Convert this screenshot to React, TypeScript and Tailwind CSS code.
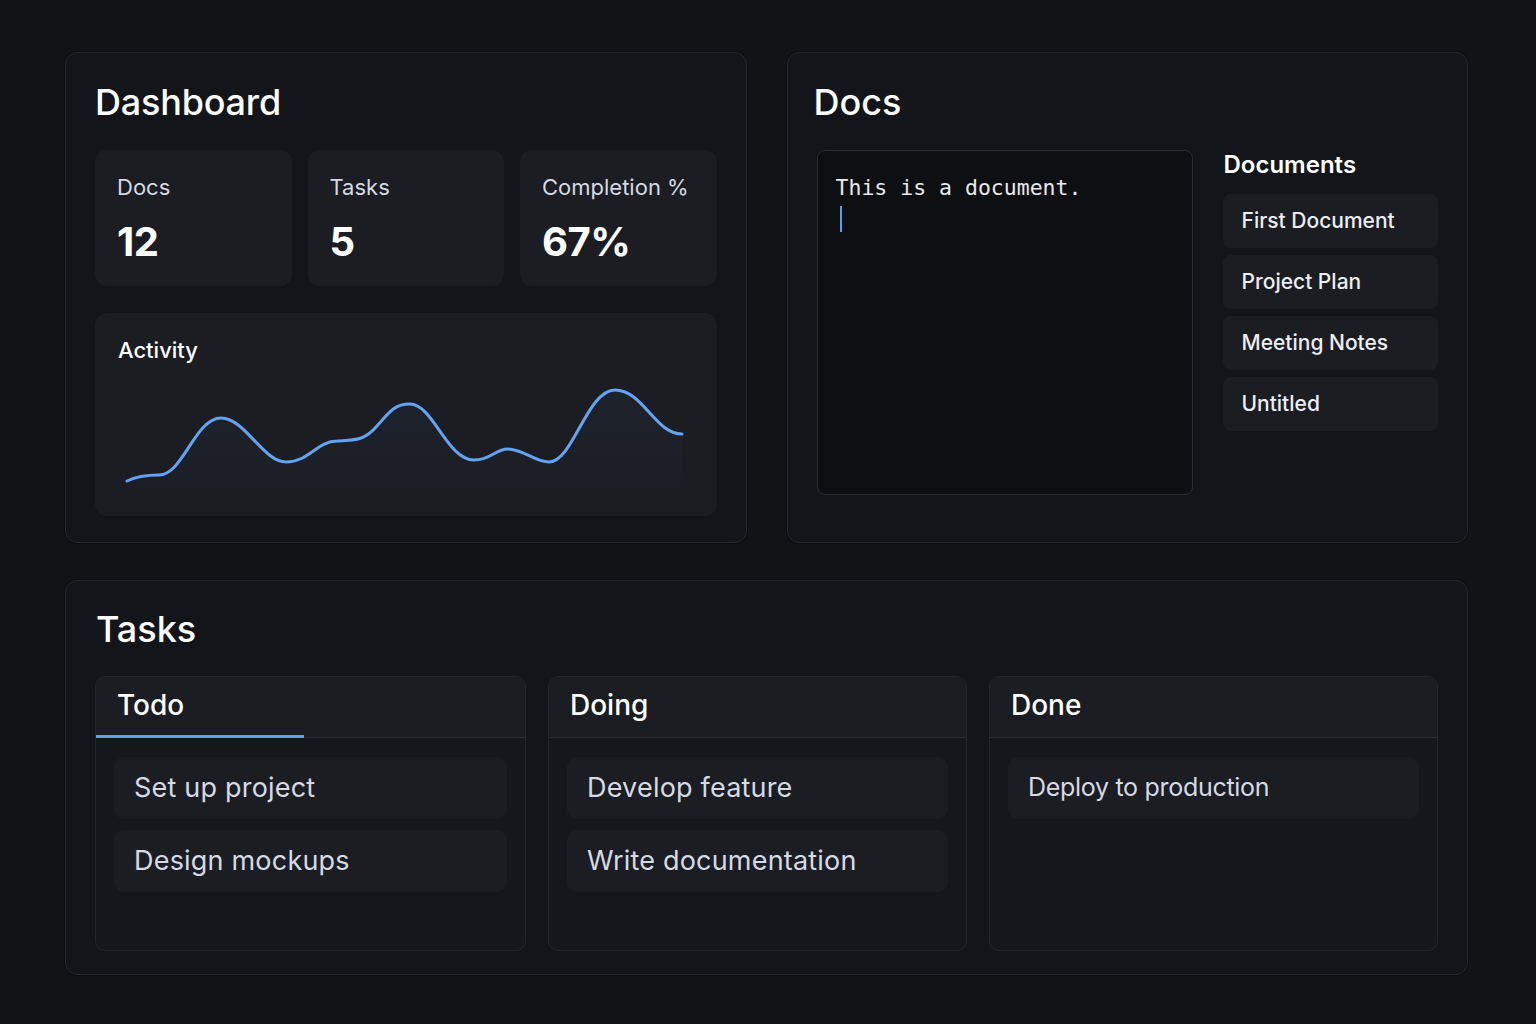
import React from "react";

const stats = [
  { label: "Docs", value: "12" },
  { label: "Tasks", value: "5" },
  { label: "Completion %", value: "67%" },
];

const documents = ["First Document", "Project Plan", "Meeting Notes", "Untitled"];

const columns = [
  { title: "Todo", active: true, tight: false, items: ["Set up project", "Design mockups"] },
  { title: "Doing", active: false, tight: false, items: ["Develop feature", "Write documentation"] },
  { title: "Done", active: false, tight: true, items: ["Deploy to production"] },
];

// same curve for the line and the faint fill below it
const curve =
  "M32 117 C42 112 54 111 64 111 C88 111 100 54 126 54 C150 54 168 98 191 98 C214 98 222 77 242 77 C262 76 270 76 282 62 C295 47 300 40 315 40 C338 40 352 96 379 96 C396 96 400 85 413 85 C428 85 440 98 454 98 C478 98 492 26 520 26 C548 26 560 70 587 70";

export default function App() {
  return (
    <div className="min-h-screen w-full bg-[#111317] pl-[65px] pr-[68px] pt-[52px] pb-[50px] font-['Inter',sans-serif] text-white">
      <div className="grid grid-cols-2 gap-10">
        <Dashboard />
        <Docs />
      </div>
      <Tasks />
    </div>
  );
}

function Panel({ children, className = "" }: { children: React.ReactNode; className?: string }) {
  return (
    <section
      className={`rounded-[12px] border border-[#262930] bg-[#13151a] shadow-[0_0_0_1px_rgba(0,0,0,0.3)] ${className}`}
    >
      {children}
    </section>
  );
}

function Dashboard() {
  return (
    <Panel className="h-[491px] px-[29px] pt-[27px]">
      <h1 className="text-[36px] leading-[44px] font-medium tracking-[-0.2px]">Dashboard</h1>
      <div className="mt-[26px] grid grid-cols-3 gap-4">
        {stats.map((s) => (
          <div key={s.label} className="h-[136px] rounded-[12px] bg-[#1b1d23] pl-[22px] pt-[23px]">
            <div className="text-[22px] leading-[28px] text-[#d5d9e1]">{s.label}</div>
            <div className="mt-[16px] text-[40px] leading-[50px] font-bold tracking-[-0.5px]">{s.value}</div>
          </div>
        ))}
      </div>
      <ActivityCard />
    </Panel>
  );
}

function ActivityCard() {
  return (
    <div className="mt-[27px] h-[203px] overflow-hidden rounded-[12px] bg-[#1b1d23]">
      <div className="pl-[23px] pt-[23px] text-[22px] leading-[28px] font-medium">Activity</div>
      <svg viewBox="0 0 622 152" width="622" height="152" className="block">
        <defs>
          <linearGradient id="fill" x1="0" y1="0" x2="0" y2="1">
            <stop offset="0%" stopColor="#60a5fa" stopOpacity="0.04" />
            <stop offset="100%" stopColor="#60a5fa" stopOpacity="0" />
          </linearGradient>
        </defs>
        <path d={`${curve} L587 135 L32 135 Z`} fill="url(#fill)" />
        <path
          d={curve}
          fill="none"
          stroke="#62a3f2"
          strokeWidth="3"
          strokeLinecap="round"
          strokeLinejoin="round"
        />
      </svg>
    </div>
  );
}

function Docs() {
  return (
    <Panel className="h-[491px] px-[29px] pt-[27px]">
      <h1 className="-ml-[3px] text-[36px] leading-[44px] font-medium">Docs</h1>
      <div className="mt-[26px] flex gap-[30px]">
        <div className="h-[345px] w-[376px] rounded-[8px] border border-[#2a2d34] bg-[#0e0f13] px-[18px] pt-[22px]">
          <p className="font-['DejaVu_Sans_Mono','Liberation_Mono',monospace] text-[21.5px] leading-[30px] text-[#e6e8ec]">
            This is a document.
          </p>
          <div className="mt-[3px] ml-[4px] h-[26px] w-[2px] bg-[#5b9be8]" />
        </div>
        <div className="flex-1 pt-[1px]">
          <h2 className="pl-[1px] text-[24px] leading-[28px] font-semibold">Documents</h2>
          <div className="mt-[15px] flex flex-col gap-[7px]">
            {documents.map((d) => (
              <div
                key={d}
                className="flex h-[54px] items-center rounded-[8px] bg-[#1b1d23] pl-[19px] text-[21px] font-medium text-[#eceef2]"
              >
                {d}
              </div>
            ))}
          </div>
        </div>
      </div>
    </Panel>
  );
}

function Tasks() {
  return (
    <Panel className="mt-[37px] h-[395px] px-[29px] pt-[26px]">
      <h1 className="pl-[1px] text-[36px] leading-[44px] font-medium">Tasks</h1>
      <div className="mt-[25px] grid grid-cols-[431px_419px_449px] gap-[22px]">
        {columns.map((c) => (
          <div key={c.title} className="h-[275px] overflow-hidden rounded-[10px] border border-[#23262c] bg-[#15171c]">
            <div className="relative flex h-[61px] items-center border-b border-[#2a2d33] bg-[#1b1d23] pb-[4px] pl-[21px]">
              <span className="text-[28px] font-medium">{c.title}</span>
              {c.active ? (
                <div className="absolute -bottom-px left-0 h-[3px] w-[208px] bg-[#5ea1f0]" />
              ) : null}
            </div>
            <div className="flex flex-col gap-[11px] px-[18px] pt-[19px]">
              {c.items.map((t) => (
                <div
                  key={t}
                  className={`flex h-[62px] items-center rounded-[10px] bg-[#1b1d23] pl-[20px] text-[#d6dae2] ${
                    c.tight ? "text-[25px] tracking-[-0.3px]" : "text-[27px] tracking-[0.2px]"
                  }`}
                >
                  {t}
                </div>
              ))}
            </div>
          </div>
        ))}
      </div>
    </Panel>
  );
}
